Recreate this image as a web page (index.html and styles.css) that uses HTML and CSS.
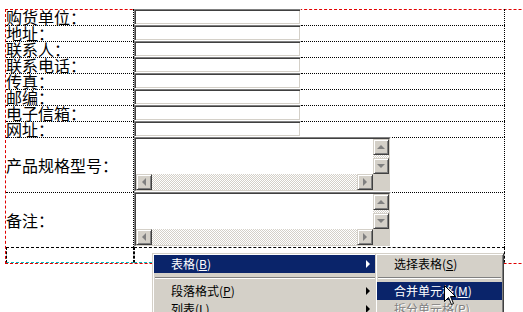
FILE: index.html
```html
<!DOCTYPE html>
<html>
<head>
<meta charset="utf-8">
<link rel="stylesheet" href="styles.css">
</head>
<body>
<div class="page">
  <div class="frame">
    <div class="tbl">
      <div class="row first"><div class="lbl">购货单位：</div><div class="mid"><div class="inp"></div></div><div class="rest"></div></div>
      <div class="row"><div class="lbl">地址：</div><div class="mid"><div class="inp"></div></div><div class="rest"></div></div>
      <div class="row"><div class="lbl">联系人：</div><div class="mid"><div class="inp"></div></div><div class="rest"></div></div>
      <div class="row"><div class="lbl">联系电话：</div><div class="mid"><div class="inp"></div></div><div class="rest"></div></div>
      <div class="row"><div class="lbl">传真：</div><div class="mid"><div class="inp"></div></div><div class="rest"></div></div>
      <div class="row"><div class="lbl">邮编：</div><div class="mid"><div class="inp"></div></div><div class="rest"></div></div>
      <div class="row"><div class="lbl">电子信箱：</div><div class="mid"><div class="inp"></div></div><div class="rest"></div></div>
      <div class="row"><div class="lbl">网址：</div><div class="mid"><div class="inp"></div></div><div class="rest"></div></div>
      <div class="row tall">
        <div class="lbl">产品规格型号：</div>
        <div class="wide">
          <div class="ta"><div class="ta-in">
            <div class="ta-text"></div>
            <div class="vbar"><div class="btn"><span class="ar up"></span></div><div class="track"></div><div class="btn"><span class="ar down"></span></div></div>
            <div class="hbar"><div class="btn"><span class="ar left"></span></div><div class="track"></div><div class="btn"><span class="ar right"></span></div></div>
            <div class="corner"></div>
          </div></div>
        </div>
      </div>
      <div class="row tall">
        <div class="lbl">备注：</div>
        <div class="wide">
          <div class="ta"><div class="ta-in">
            <div class="ta-text"></div>
            <div class="vbar"><div class="btn"><span class="ar up"></span></div><div class="track"></div><div class="btn"><span class="ar down"></span></div></div>
            <div class="hbar"><div class="btn"><span class="ar left"></span></div><div class="track"></div><div class="btn"><span class="ar right"></span></div></div>
            <div class="corner"></div>
          </div></div>
        </div>
      </div>
      <div class="row last"><div class="sel"></div><div class="sel"></div></div>
    </div>
  </div>

  <div class="menu main-menu">
    <div class="item hl">表格(<u>B</u>)<span class="sub-ar"></span></div>
    <div class="sep"></div>
    <div class="item">段落格式(<u>P</u>)<span class="sub-ar"></span></div>
    <div class="item">列表(<u>L</u>)<span class="sub-ar"></span></div>
  </div>
  <div class="menu sub-menu">
    <div class="item">选择表格(<u>S</u>)</div>
    <div class="sep"></div>
    <div class="item hl">合并单元格(<u>M</u>)</div>
    <div class="item dis">拆分单元格(<u>P</u>)...</div>
  </div>
  <svg class="cursor" width="13" height="21" viewBox="0 0 13 21">
    <path d="M0.5 0.5 L0.5 16.5 L4.5 12.5 L7.5 19.5 L9.5 18.5 L6.5 11.5 L11.5 11.5 Z" fill="#fff" stroke="#000" stroke-width="1"/>
  </svg>
</div>
</body>
</html>
```

FILE: styles.css
```css
html, body {
  margin: 0;
  padding: 0;
  overflow: hidden;
  background: #fff;
}
.page {
  position: relative;
  width: 523px;
  height: 312px;
  padding: 9px 0 0 5px;
  box-sizing: border-box;
  font-family: "Noto Sans CJK SC", "Noto Sans", sans-serif;
  color: #000;
}
.frame {
  width: 700px;
  border-top: 1px dashed #e00000;
  border-left: 1px dashed #e00000;
  border-bottom: 1px dashed #e00000;
}
.tbl {
  width: 499px;
  margin-top: -1px;
}
.row {
  display: grid;
  grid-template-columns: 128px 167px 204px;
  height: 16px;
}
.row > div {
  box-sizing: border-box;
}
.lbl {
  border-top: 1px dotted #000;
  border-right: 1px dotted #000;
  font-size: 16px;
  line-height: 15px;
  white-space: nowrap;
  overflow: visible;
  position: relative;
  z-index: 1;
}
.first .lbl, .first .rest {
  border-top: none;
  line-height: 16px;
}
.rest {
  border-top: 1px dotted #000;
  border-right: 1px dotted #000;
}
.inp {
  height: 16px;
  box-sizing: border-box;
  background: #fff;
  border-top: 1px solid #808080;
  border-left: 1px solid #808080;
  border-right: 1px solid #fff;
  border-bottom: 1px solid #fff;
  box-shadow: inset 1px 1px 0 #404040, inset -1px -1px 0 #d4d0c8;
}
.tall {
  grid-template-columns: 128px 371px;
  height: 55px;
}
.tall .lbl {
  display: flex;
  align-items: center;
  line-height: 16px;
}
.wide {
  border-top: 1px dotted #000;
  border-right: 1px dotted #000;
}
.ta {
  width: 257px;
  height: 55px;
  margin-top: -1px;
  box-sizing: border-box;
  border-top: 1px solid #808080;
  border-left: 1px solid #808080;
  border-right: 1px solid #fff;
  border-bottom: 1px solid #fff;
}
.ta-in {
  height: 100%;
  box-sizing: border-box;
  border-top: 1px solid #404040;
  border-left: 1px solid #404040;
  border-right: 1px solid #d4d0c8;
  border-bottom: 1px solid #d4d0c8;
  background: #fff;
  display: grid;
  grid-template-columns: 1fr 16px;
  grid-template-rows: 1fr 16px;
}
.vbar {
  display: flex;
  flex-direction: column;
}
.hbar {
  display: flex;
}
.track {
  flex: 1;
  background: repeating-conic-gradient(#d4d0c8 0 25%, #fff 0 50%) 0 0 / 2px 2px;
}
.corner {
  background: #d4d0c8;
}
.btn {
  width: 16px;
  height: 16px;
  flex: none;
  box-sizing: border-box;
  background: #d4d0c8;
  border-top: 1px solid #d4d0c8;
  border-left: 1px solid #d4d0c8;
  border-right: 1px solid #404040;
  border-bottom: 1px solid #404040;
  box-shadow: inset 1px 1px 0 #fff, inset -1px -1px 0 #808080;
  display: flex;
  align-items: center;
  justify-content: center;
}
.ar {
  width: 0;
  height: 0;
}
.ar.up {
  border-left: 4px solid transparent;
  border-right: 4px solid transparent;
  border-bottom: 4px solid #808080;
}
.ar.down {
  border-left: 4px solid transparent;
  border-right: 4px solid transparent;
  border-top: 4px solid #808080;
}
.ar.left {
  border-top: 4px solid transparent;
  border-bottom: 4px solid transparent;
  border-right: 4px solid #808080;
}
.ar.right {
  border-top: 4px solid transparent;
  border-bottom: 4px solid transparent;
  border-left: 4px solid #808080;
}
.last {
  grid-template-columns: 128px 371px;
  height: 16px;
}
.sel {
  border: 1px dashed #000;
  border-bottom: 1px dashed #00c0c0;
  box-shadow: inset 0 -1px 0 #fff;
}

/* menus */
.menu {
  position: absolute;
  top: 253px;
  box-sizing: border-box;
  background: #d4d0c8;
  border-top: 1px solid #d4d0c8;
  border-left: 1px solid #d4d0c8;
  border-right: 1px solid #404040;
  border-bottom: 1px solid #404040;
  box-shadow: inset 1px 1px 0 #fff, inset -1px -1px 0 #808080;
  padding: 1px;
  font-size: 12px;
  z-index: 5;
}
.main-menu {
  left: 152px;
  width: 226px;
  height: 80px;
}
.sub-menu {
  left: 375px;
  width: 129px;
  height: 80px;
  z-index: 6;
}
.item {
  position: relative;
  height: 18px;
  line-height: 18px;
  padding-left: 17px;
  white-space: nowrap;
  color: #000;
}
.item u {
  text-decoration: underline;
  text-underline-offset: 1px;
}
.item.hl {
  background: #0a246a;
  color: #fff;
}
.item.dis {
  color: #808080;
  text-shadow: 1px 1px 0 #fff;
}
.sep {
  height: 9px;
  position: relative;
}
.sep::before {
  content: "";
  position: absolute;
  left: 1px;
  right: 1px;
  top: 4px;
  height: 1px;
  background: #808080;
  box-shadow: 0 1px 0 #fff;
}
.sub-ar {
  position: absolute;
  left: 212px;
  top: 5px;
  width: 0;
  height: 0;
  border-top: 4px solid transparent;
  border-bottom: 4px solid transparent;
  border-left: 4px solid #000;
}
.item.hl .sub-ar {
  border-left-color: #fff;
}
.cursor {
  position: absolute;
  left: 444px;
  top: 285px;
  z-index: 10;
}
```
